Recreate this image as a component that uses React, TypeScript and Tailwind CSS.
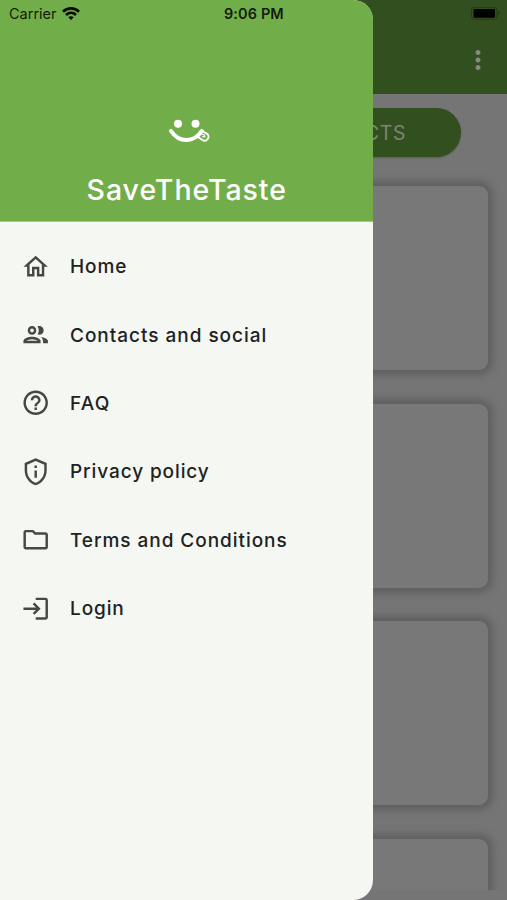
import {
  MdHelpOutline,
  MdLogin,
  MdMoreVert,
  MdOutlineFolder,
  MdOutlineHome,
  MdOutlinePrivacyTip,
} from "react-icons/md"

function PeopleIcon({ className }: { className?: string }) {
  return (
    <svg className={className} viewBox="0 0 24 24" fill="currentColor">
      <path d="M9 13.75c-2.34 0-7 1.17-7 3.5V19h14v-1.75c0-2.33-4.66-3.5-7-3.5zM4.34 17c.84-.58 2.87-1.25 4.66-1.25s3.82.67 4.66 1.25H4.34zM9 12c1.93 0 3.5-1.57 3.5-3.5S10.93 5 9 5 5.5 6.57 5.5 8.5 7.07 12 9 12zm0-5c.83 0 1.5.67 1.5 1.5S9.83 10 9 10s-1.5-.67-1.5-1.5S8.17 7 9 7zm7.04 6.81c1.16.84 1.96 1.96 1.96 3.44V19h4v-1.75c0-2.02-3.5-3.17-5.96-3.44zM15 12c1.93 0 3.5-1.57 3.5-3.5S16.93 5 15 5c-.54 0-1.04.13-1.5.35.63.89 1 1.98 1 3.15s-.37 2.26-1 3.15c.46.22.96.35 1.5.35z" />
    </svg>
  )
}

const menuItems = [
  { label: "Home", icon: MdOutlineHome, spacing: "tracking-[0.95px]" },
  { label: "Contacts and social", icon: PeopleIcon, spacing: "tracking-[0.97px]" },
  { label: "FAQ", icon: MdHelpOutline, spacing: "tracking-[1.2px]" },
  { label: "Privacy policy", icon: MdOutlinePrivacyTip, spacing: "tracking-[0.9px]" },
  { label: "Terms and Conditions", icon: MdOutlineFolder, spacing: "tracking-[0.95px]" },
  { label: "Login", icon: MdLogin, spacing: "tracking-[0.9px]" },
]

function Logo() {
  return (
    <svg className="h-[26px] w-[44px]" viewBox="0 0 44 26" fill="none">
      <circle cx="11" cy="6.8" r="4" fill="#fff" />
      <circle cx="28.5" cy="6.8" r="4" fill="#fff" />
      <path d="M3.9 13.8C8 20 13.5 23 19.5 23C26 23 31 20 34.8 13.8" stroke="#fff" strokeWidth="3.9" strokeLinecap="round" />
      <path
        d="M35.4 14.2L39.8 16.6C42 18 42 20.4 40.6 22.2C39.2 24 36.8 24 35 22.8L31 20"
        stroke="#fff"
        strokeWidth="1.9"
        strokeLinejoin="round"
      />
      <path d="M34.4 17.6C36.4 16.8 38.2 18.2 37.8 19.8L35.2 19.7" stroke="#fff" strokeWidth="1.2" />
    </svg>
  )
}

function StatusBar() {
  return (
    <div className="absolute inset-x-0 top-0 flex h-7 items-center text-[14.5px] text-black/85">
      <span className="ml-[9px] w-[47px] whitespace-nowrap">Carrier</span>
      <svg className="ml-[6px] h-[14px] w-[18px]" viewBox="0 0 18 14" fill="none" stroke="#050a03" strokeWidth="2.7">
        <path d="M1 4.7C5.5 0.3 12.5 0.3 17 4.7" />
        <path d="M4 8C7 5.2 11 5.2 14 8" />
        <path d="M6.3 10.3C7.8 9 10.2 9 11.7 10.3L9 13.1Z" fill="#050a03" stroke="none" />
      </svg>
      <span className="ml-[144px] font-semibold tracking-[0.1px] whitespace-nowrap">9:06 PM</span>
      <svg className="mr-[7px] ml-auto h-[14px] w-[30px]" viewBox="0 0 30 14">
        <rect x="1.5" y="0.3" width="25.5" height="12" rx="3" fill="none" stroke="#233b15" />
        <rect x="3.5" y="1.9" width="21.5" height="8.8" rx="1" fill="#000" />
        <path d="M28 4.3v4q1.5-.7 1.5-2T28 4.3Z" fill="#233b15" />
      </svg>
    </div>
  )
}

function ProductsPage() {
  return (
    <div className="flex h-full flex-col">
      <header className="flex h-[94px] shrink-0 justify-end bg-[#32501f] pt-[45px] pr-[14px]">
        <MdMoreVert className="size-[30px] text-[#858a82]" />
      </header>
      <div className="flex justify-end pt-[14px] pr-[46px]">
        <button className="h-[49px] w-[220px] rounded-full bg-[#32501f] pt-[2px] pr-[55px] text-right text-[19.5px] tracking-[0.6px] text-[#7c8577] shadow-[0_1px_2px_rgba(0,0,0,0.2)]">
          PRODUCTS
        </button>
      </div>
      <div className="mt-[14px] flex h-[719px] flex-col gap-[33.5px] overflow-hidden pt-[15px] pr-[19px] pl-[19px]">
        {[1, 2, 3, 4].map((card) => (
          <div
            key={card}
            className="h-[184px] shrink-0 rounded-[9px] bg-[#787878] shadow-[0_0_7px_5px_#606060]"
          />
        ))}
      </div>
    </div>
  )
}

function Drawer() {
  return (
    <aside className="absolute inset-y-0 left-0 flex w-[372.5px] flex-col overflow-hidden rounded-r-[20px] bg-[#f5f7f2]">
      <div className="flex h-[221.5px] flex-col items-center border-b border-[#a5c78c] bg-[#71ad48] pt-[117px]">
        <div className="pl-[5px]">
          <Logo />
        </div>
        <h1 className="mt-[25px] pl-px text-[28.5px] leading-[44px] font-[450] tracking-[0.95px] text-white">
          SaveTheTaste
        </h1>
      </div>
      <nav className="pt-[10.6px]">
        {menuItems.map(({ label, icon: Icon, spacing }) => (
          <a key={label} className="flex h-[68.4px] items-center pl-[20.5px] text-[#20221f]">
            <Icon className="size-[29.4px] text-[#454843]" />
            <span className={`ml-[20.1px] pt-[2.4px] text-[19px] font-medium ${spacing}`}>{label}</span>
          </a>
        ))}
      </nav>
    </aside>
  )
}

export default function App() {
  return (
    <div className="relative h-[900px] w-[507px] overflow-hidden bg-[#757575] font-[Inter,sans-serif]">
      <ProductsPage />
      <Drawer />
      <StatusBar />
    </div>
  )
}
